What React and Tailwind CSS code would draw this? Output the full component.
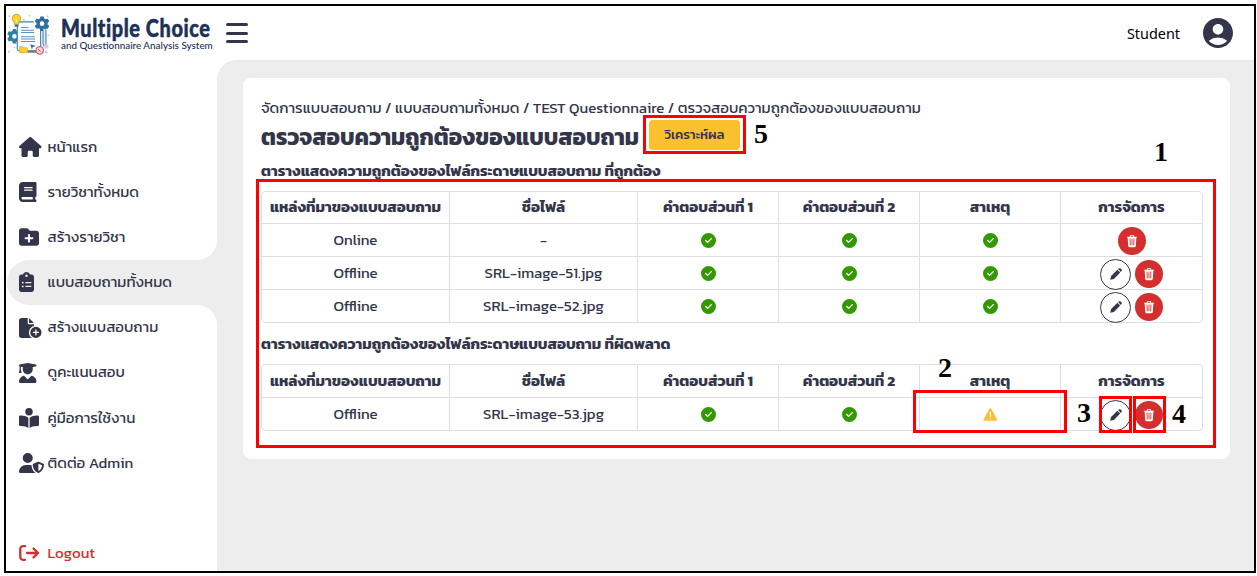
import { FaHouse, FaBook, FaFolderPlus, FaClipboardList, FaFileCirclePlus, FaUserGraduate, FaBookOpenReader, FaUserShield, FaCircleCheck, FaGear } from "react-icons/fa6";
import { MdAccountCircle } from "react-icons/md";
import { IoTrash, IoWarning } from "react-icons/io5";

const menu = [
  { label: "หน้าแรก", Icon: FaHouse, width: "w-[22.5px]" },
  { label: "รายวิชาทั้งหมด", Icon: FaBook, width: "w-[17.5px]" },
  { label: "สร้างรายวิชา", Icon: FaFolderPlus, width: "w-[20px]", shape: "rounded-br-[20px]" },
  { label: "แบบสอบถามทั้งหมด", Icon: FaClipboardList, width: "w-[15px]", active: true },
  { label: "สร้างแบบสอบถาม", Icon: FaFileCirclePlus, width: "w-[22.5px]", shape: "rounded-tr-[20px]" },
  { label: "ดูคะแนนสอบ", Icon: FaUserGraduate, width: "w-[17.5px]" },
  { label: "คู่มือการใช้งาน", Icon: FaBookOpenReader, width: "w-[20px]" },
  { label: "ติดต่อ Admin", Icon: FaUserShield, width: "w-[25px]" },
];

const heads = ["แหล่งที่มาของแบบสอบถาม", "ชื่อไฟล์", "คำตอบส่วนที่ 1", "คำตอบส่วนที่ 2", "สาเหตุ", "การจัดการ"];

function Logo() {
  return (
    <svg width="43" height="45" viewBox="0 0 46 48" fill="none" className="ml-px shrink-0">
      <FaGear x="0" y="19" width="15" height="18" fill="#2f7dab" />
      <rect x="11" y="11.5" width="25" height="31" rx="2" fill="#fff" stroke="#3a7fae" strokeWidth="1.2" />
      <path d="M15 17.5h8M15 20.5h14M15 23h14M15 27.5h15M15 30h15M15 32.5h15" stroke="#5793bd" strokeWidth="1.1" />
      <circle cx="34.5" cy="10.5" r="6" fill="#fff" />
      <FaGear x="29.5" y="5.500" width="10" height="10" fill="#2f6f9f" />
      <path d="M10 3.300a4.600 4.600 0 0 1 2.600 8.400v2.500H7.600v-2.500A4.600 4.600 0 0 1 10 3.300Z" fill="#fbd02c" stroke="#d7a52c" />
      <path d="M10 7.500v5" stroke="#fff3b0" strokeWidth="1" />
      <path d="M8.200 14.500h4v2.300h-4z" fill="#2f6f9f" />
      <path d="M38.500 18.500h3.200v16.500l-1.600 3.500-1.600-3.500z" fill="#d9edf7" stroke="#2f6f9f" />
      <path d="M38.500 17h3.200" stroke="#2f6f9f" strokeWidth="1.500" />
      <path d="M25 35.500l6 2-3.500 1-.8 3z" fill="#2f6f9f" />
      <path d="M22 43.500h9" stroke="#64748b" strokeWidth="2" />
      <path d="M13.500 38h3l1 1.300h4.500v5.200h-8.500z" fill="#fbd02c" stroke="#d7a52c" strokeWidth=".7" />
      <circle cx="42" cy="38" r="2.500" fill="#cfd3d8" />
      <circle cx="42" cy="44" r="1.500" fill="#cfd3d8" />
      <circle cx="35" cy="42" r="4" fill="#f8d5d8" stroke="#d96570" strokeWidth="1.400" />
      <path d="M33 40.500l3 3" stroke="#c94450" />
      <g fill="#85b8d8">
        <circle cx="2.500" cy="5.500" r=".8" /><circle cx="18" cy="9" r=".9" /><circle cx="24" cy="5" r=".7" />
        <circle cx="43.500" cy="5.500" r=".8" /><circle cx="44" cy="15" r=".7" /><circle cx="44" cy="26" r=".7" />
        <circle cx="2" cy="43.500" r=".9" /><circle cx="8" cy="39" r=".7" /><circle cx="3" cy="17" r=".7" />
      </g>
    </svg>
  );
}

function Pencil() {
  return (
    <svg width="12" height="12" viewBox="0 0 12 12" fill="currentColor">
      <path d="M.2 11.8l.9-3.700 6.300-6.300 2.800 2.800-6.300 6.300z" />
      <path d="M8.100 1.100l.6-.5a1.500 1.500 0 0 1 2 0l.7.700a1.500 1.500 0 0 1 0 2l-.5.600z" />
    </svg>
  );
}

function LogoutIcon() {
  return (
    <svg width="21" height="16" viewBox="0 0 21 16" fill="none" stroke="currentColor" strokeWidth="2.300" strokeLinecap="round" strokeLinejoin="round">
      <path d="M6 1.200H4a2.700 2.700 0 0 0-2.700 2.700v8.200A2.700 2.700 0 0 0 4 14.800h2" />
      <path d="M8 8h11M14.500 3.500 19 8l-4.500 4.500" />
    </svg>
  );
}

const cell = "flex items-center justify-center border-l border-[#dfdfdf] first:border-l-0";
const grid = "grid grid-cols-[187px_188px_141px_141px_141px_142px]";

function Check() {
  return <FaCircleCheck className="text-[15px] text-[#339900]" />;
}

function Table({ rows, warn, headHeight }) {
  return (
    <div className="w-[942px] rounded-[4px] border border-[#dfdfdf] text-[15.05px]">
      <div className={`${grid} ${headHeight} font-bold`}>
        {heads.map((h) => <div key={h} className={cell}><span className="whitespace-nowrap">{h}</span></div>)}
      </div>
      {rows.map(([source, file]) => (
        <div key={file} className={`${grid} h-[33px] grid-rows-[32px] border-t border-[#dfdfdf]`}>
          <div className={cell}>{source}</div>
          <div className={cell}>{file}</div>
          <div className={cell}><Check /></div>
          <div className={cell}><Check /></div>
          <div className={cell}>
            {warn ? <IoWarning className="text-[17px] text-[#fbc02d]" /> : <Check />}
          </div>
          <div className={`${cell} gap-1`}>
            {source === "Offline" && (
              <button className="flex size-[31px] shrink-0 translate-y-px items-center justify-center rounded-full border border-[#33364a] bg-white">
                <Pencil />
              </button>
            )}
            <button className="flex size-[28px] shrink-0 translate-y-px items-center justify-center rounded-full bg-[#d32f2f] text-white">
              <IoTrash className="text-[14px]" />
            </button>
          </div>
        </div>
      ))}
    </div>
  );
}

const mark = "pointer-events-none absolute border-[3px] border-[#ff0000]";
const num = "absolute font-['Liberation_Serif',serif] text-[28px] font-bold leading-none text-black";

export default function App() {
  return (
    <div className="relative h-[576px] w-[1257px] overflow-hidden bg-white pt-1 pl-1 font-['Kanit','Open_Sans',sans-serif] text-[#33364a]">
      <div className="flex h-[569px] w-[1252px] flex-col border-2 border-black">
        <header className="z-10 flex h-[54px] shrink-0 items-center">
          <Logo />
          <div className="ml-[11px] flex w-[153px] flex-col text-[#1c3157]">
            <span className="origin-left scale-x-[0.83] whitespace-nowrap font-['Lato',sans-serif] text-[24px] font-black leading-[24px] tracking-[0.7px] [-webkit-text-stroke:0.5px_#1c3157]">Multiple Choice</span>
            <span className="whitespace-nowrap font-['Lato',sans-serif] text-[9.9px] font-medium leading-[10px]">and Questionnaire Analysis System</span>
          </div>
          <div className="ml-[12px] flex flex-col gap-[5.500px]">
            <span className="h-[3px] w-[22px] rounded-full bg-[#33364a]" />
            <span className="h-[3px] w-[22px] rounded-full bg-[#33364a]" />
            <span className="h-[3px] w-[22px] rounded-full bg-[#33364a]" />
          </div>
          <span className="mr-[20px] ml-auto pt-px font-['Noto_Sans',sans-serif] text-[14.400px] text-black">Student</span>
          <MdAccountCircle className="mr-[18px] text-[36px]" />
        </header>
        <div className="flex flex-1">
          <nav className="flex w-[211px] flex-col bg-[#ededed] text-[15.05px]">
            <div className="h-[64.500px] bg-white" />
            {menu.map(({ label, Icon, width, active, shape }) => (
              <div key={label} className={active ? "bg-[linear-gradient(to_right,white_50%,#ededed_50%)] pl-px" : ""}>
                <div className={`flex h-[45.150px] items-center ${active ? "rounded-l-full bg-[#ededed] pl-[12px]" : "bg-white pl-[13px]"} ${shape || ""}`}>
                  <span className="w-[28.500px] shrink-0"><Icon className={`h-5 ${width}`} /></span>
                  <span className="whitespace-nowrap">{label}</span>
                </div>
              </div>
            ))}
            <div className="flex flex-1 items-end bg-white pb-[6px] pl-[13px] text-[#d32f2f]">
              <span className="flex h-[24px] items-center">
                <span className="w-[28.500px]"><LogoutIcon /></span>
                <span>Logout</span>
              </span>
            </div>
          </nav>
          <main className="flex-1 bg-white">
            <div className="h-full rounded-tl-[20px] bg-[#ededed] pt-[18px] pl-[26px] shadow-[inset_0_2px_2px_-1px_rgba(0,0,0,0.03)]">
              <section className="h-[381px] w-[987px] rounded-[8px] bg-white pt-[20px] pl-[18px]">
                <p className="h-[20px] whitespace-nowrap text-[15.05px] leading-[20px]">จัดการแบบสอบถาม / แบบสอบถามทั้งหมด / TEST Questionnaire / ตรวจสอบความถูกต้องของแบบสอบถาม</p>
                <div className="flex h-[39px] items-center gap-[11px]">
                  <h1 className="mb-[2px] w-[377px] whitespace-nowrap text-[22.560px] font-bold leading-[34px]">ตรวจสอบความถูกต้องของแบบสอบถาม</h1>
                  <button className="mb-[5px] h-[30px] w-[91px] rounded-[4px] bg-[#fbc02d] text-[13.200px] font-medium">วิเคราะห์ผล</button>
                </div>
                <h2 className="h-[34px] whitespace-nowrap text-[15.05px] font-bold leading-[28px]">ตารางแสดงความถูกต้องของไฟล์กระดาษแบบสอบถาม ที่ถูกต้อง</h2>
                <Table headHeight="h-[31px]" rows={[["Online", "-"], ["Offline", "SRL-image-51.jpg"], ["Offline", "SRL-image-52.jpg"]]} />
                <h2 className="h-[41px] whitespace-nowrap text-[15.05px] font-bold leading-[41px]">ตารางแสดงความถูกต้องของไฟล์กระดาษแบบสอบถาม ที่ผิดพลาด</h2>
                <Table warn headHeight="h-[32px]" rows={[["Offline", "SRL-image-53.jpg"]]} />
              </section>
            </div>
          </main>
        </div>
      </div>

      <div className={`${mark} top-[179px] left-[256px] h-[269px] w-[960px]`} />
      <div className={`${mark} top-[390px] left-[913px] h-[43px] w-[154px]`} />
      <div className={`${mark} top-[396px] left-[1099px] h-[37px] w-[33px]`} />
      <div className={`${mark} top-[396px] left-[1133px] h-[37px] w-[33px]`} />
      <div className={`${mark} top-[115px] left-[643px] h-[39px] w-[103px]`} />
      <span className={`${num} top-[138px] left-[1154px]`}>1</span>
      <span className={`${num} top-[354px] left-[938px]`}>2</span>
      <span className={`${num} top-[399px] left-[1077px]`}>3</span>
      <span className={`${num} top-[400px] left-[1172px]`}>4</span>
      <span className={`${num} top-[120px] left-[754px]`}>5</span>
    </div>
  );
}
